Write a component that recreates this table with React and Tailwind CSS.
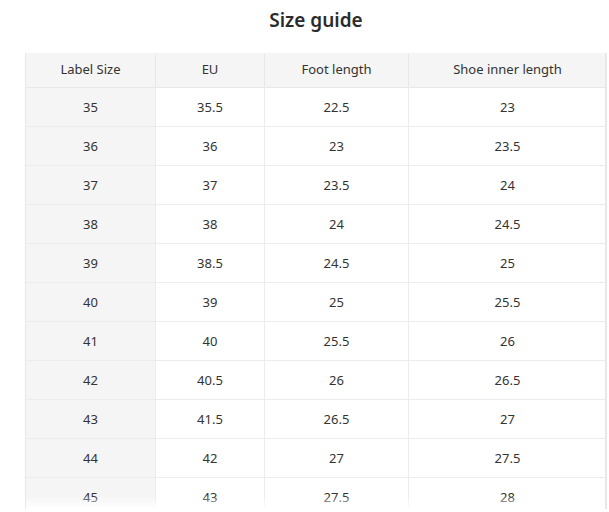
import React from "react";

const rows = [
  ["35", "35.5", "22.5", "23"],
  ["36", "36", "23", "23.5"],
  ["37", "37", "23.5", "24"],
  ["38", "38", "24", "24.5"],
  ["39", "38.5", "24.5", "25"],
  ["40", "39", "25", "25.5"],
  ["41", "40", "25.5", "26"],
  ["42", "40.5", "26", "26.5"],
  ["43", "41.5", "26.5", "27"],
  ["44", "42", "27", "27.5"],
  ["45", "43", "27.5", "28"],
];

const cols = "grid grid-cols-[130px_109px_144px_197px]";

export default function App() {
  return (
    <div className="w-[609px] h-[512px] overflow-hidden bg-white text-[#333333]" style={{ fontFamily: '"Noto Sans", "Open Sans", sans-serif' }}>
      <div className="ml-[25px] w-[582px]">
        <div className="h-[42px] pt-[6px] text-center text-[19px] font-semibold text-[#2b2b2b] leading-[28px]">Size guide</div>
        <div className="relative mt-[11px] h-[456px] overflow-hidden border-l border-r-2 border-[#e8e8e8] w-[582px]">
          <div className={`${cols} h-[35px] bg-[#f5f5f5] border-b border-[#e8e8e8] text-[13px]`}>
            {["Label Size", "EU", "Foot length", "Shoe inner length"].map((h, i) => (
              <div key={i} className={`flex items-center justify-center ${i < 3 ? "border-r border-[#e8e8e8]" : ""}`}>{h}</div>
            ))}
          </div>
          {rows.map((r, ri) => (
            <div key={ri} className={`${cols} h-[39px] border-b border-[#ececec] text-[13px]`}>
              {r.map((c, i) => (
                <div key={i} className={`flex items-center justify-center pt-[2px] ${i === 0 ? "bg-[#f5f5f5]" : ""} ${i < 3 ? "border-r border-[#ececec]" : ""}`}>{c}</div>
              ))}
            </div>
          ))}
          <div className="pointer-events-none absolute left-0 right-0 top-[443px] h-[13px] bg-gradient-to-b from-white/0 to-white" />
        </div>
      </div>
    </div>
  );
}
